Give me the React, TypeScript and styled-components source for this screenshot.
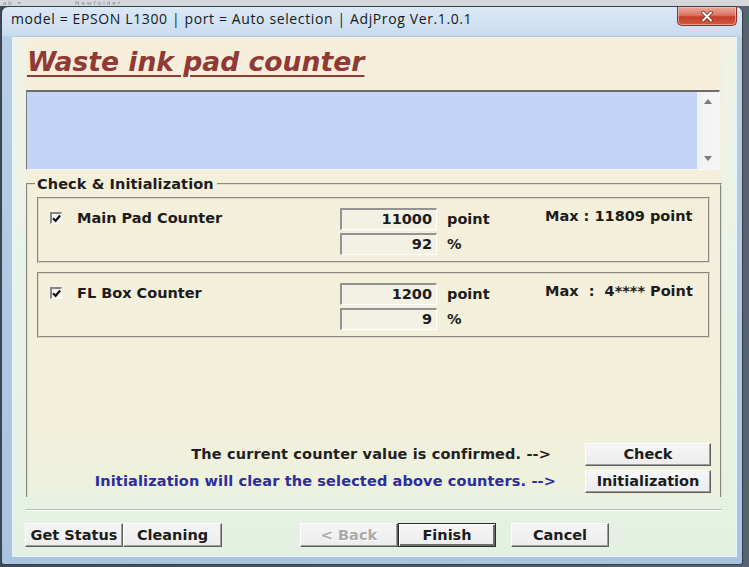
import React from "react";
import styled, { createGlobalStyle } from "styled-components";

const Global = createGlobalStyle`
  html, body { margin: 0; padding: 0; background: #4d5967; }
  body { width: 749px; height: 567px; overflow: hidden; font-family: "DejaVu Sans", sans-serif; }
  #root { width: 749px; height: 567px; }
`;

const Page = styled.div`
  width: 749px;
  height: 567px;
  display: flex;
  flex-direction: column;
  background: linear-gradient(90deg, #3e4a58 0%, #56626f 100%);
`;

const DesktopStrip = styled.div`
  height: 6px;
  flex: none;
  overflow: hidden;
  display: flex;
  gap: 52px;
  padding-left: 3px;
  background: #d4d8da;
  color: #80858a;
  font: 6px/6px "Open Sans", sans-serif;
  letter-spacing: 2px;
  filter: blur(0.6px);
`;

const DesktopRow = styled.div`
  flex: 1;
  display: flex;
`;

const Window = styled.div`
  width: 742px;
  height: 559px;
  margin-left: 1px;
  box-sizing: border-box;
  border: 1px solid #36404c;
  border-radius: 7px 7px 3px 3px;
  padding: 0 5px 7px 10px;
  display: flex;
  flex-direction: column;
  background: linear-gradient(180deg, #dbe8f5 0px, #c9dcef 28px, #b7cee7 30px, #aac3e0 100%);
`;

const TitleBar = styled.div`
  height: 29px;
  flex: none;
  display: flex;
  align-items: flex-start;
`;

const TitleText = styled.div`
  flex: 1;
  margin: 3px 0 0 -1px;
  font: 14px/18px "Open Sans", sans-serif;
  letter-spacing: 0.62px;
  color: #15191e;
  white-space: nowrap;
`;

const CloseButton = styled.div`
  width: 60px;
  height: 19px;
  box-sizing: border-box;
  border: 1px solid #8d2f24;
  border-top: none;
  border-radius: 0 0 5px 5px;
  display: flex;
  align-items: center;
  justify-content: center;
  background: linear-gradient(180deg, #eaa99c 0%, #db7563 45%, #c53e2b 55%, #d2593f 100%);
  box-shadow: inset 0 0 0 1px rgba(255, 210, 200, 0.55);
`;

const Client = styled.div`
  flex: 1;
  display: flex;
  flex-direction: column;
  box-sizing: border-box;
  border: 1px solid #eaf3f7;
  border-top-color: #b8c8d4;
  padding: 1px 14px 0 13px;
  background: linear-gradient(180deg, #f2f2e6 0%, #eaf3e7 40%, #e4f1e2 100%);
`;

const Panel = styled.div`
  height: 459px;
  flex: none;
  display: flex;
  flex-direction: column;
  background: linear-gradient(180deg, #f7eedc 0%, #f4efda 30%, #f2f0db 85%, #ecf1df 100%);
`;

const Header = styled.div`
  height: 50px;
  flex: none;
  box-sizing: border-box;
  padding: 8px 0 0 1px;
`;

const PageTitle = styled.h1`
  margin: 0;
  display: inline-block;
  font: italic bold 26.6px/32px "DejaVu Sans", sans-serif;
  color: #8f3a34;
  text-decoration: underline;
  text-decoration-thickness: 2px;
  text-underline-offset: 4px;
`;

const Memo = styled.div`
  height: 80px;
  margin: 2px 2px 0 0;
  flex: none;
  display: flex;
  box-sizing: border-box;
  border-top: 2px solid #6c6c6c;
  border-left: 1px solid #7a7a7a;
  border-right: 1px solid #f6f6f6;
  border-bottom: 1px solid #f6f6f6;
  background: #c4d3f8;
`;

const MemoText = styled.div`
  flex: 1;
`;

const ScrollBar = styled.div`
  width: 22px;
  display: flex;
  flex-direction: column;
  justify-content: space-between;
  align-items: center;
  padding: 7px 0 8px;
  background: linear-gradient(90deg, #f1f1f1, #f6f6f6);
`;

const GroupBox = styled.section`
  flex: 1;
  margin-top: 6px;
  display: flex;
  flex-direction: column;
`;

const GroupHead = styled.div`
  height: 17px;
  flex: none;
  display: flex;
`;

const HeadLine = styled.span<{ $grow?: boolean }>`
  align-self: flex-end;
  height: 8px;
  width: ${(p) => (p.$grow ? "auto" : "7px")};
  flex: ${(p) => (p.$grow ? 1 : "none")};
  border-top: 2px groove #dedbcb;
  ${(p) => (p.$grow ? "border-right: 2px groove #dedbcb;" : "border-left: 2px groove #dedbcb;")}
`;

const Legend = styled.h2`
  margin: 0;
  padding: 0 3px 0 2px;
  font: bold 14.5px/17px "DejaVu Sans", sans-serif;
  letter-spacing: 0.1px;
  color: #1c1c1c;
`;

const GroupBody = styled.div`
  flex: 1;
  display: flex;
  flex-direction: column;
  padding: 4px 9px 4px 9px;
  border-left: 2px groove #dedbcb;
  border-right: 2px groove #dedbcb;
`;

const CounterFrame = styled.div<{ $top?: number }>`
  height: 66px;
  flex: none;
  margin: ${(p) => p.$top ?? 0}px 1px 0 0;
  box-sizing: border-box;
  border: 2px groove #dedbcb;
  padding: 9px 0 0 11px;
  display: grid;
  grid-template-columns: 27px 263px 97px 108px 1fr;
  grid-template-rows: 22px 22px;
  row-gap: 3px;
  align-items: center;
`;

const CheckBox = styled.span`
  width: 12px;
  height: 12px;
  box-sizing: border-box;
  border-top: 2px solid #858585;
  border-left: 2px solid #858585;
  border-right: 1px solid #ffffff;
  border-bottom: 1px solid #ffffff;
  background: #f7f6f0;
  display: flex;
  align-items: center;
  justify-content: center;
  margin-top: -3px;
`;

const Label = styled.span`
  font: bold 14.5px/17px "DejaVu Sans", sans-serif;
  color: #1c1c1c;
  white-space: pre;
`;

const CounterName = styled(Label)`
  margin-top: -2px;
`;

const ValueBox = styled.div<{ $row: number }>`
  grid-column: 3;
  grid-row: ${(p) => p.$row};
  height: 22px;
  box-sizing: border-box;
  border-top: 2px solid #939393;
  border-left: 2px solid #939393;
  border-right: 1px solid #ffffff;
  border-bottom: 1px solid #ffffff;
  padding-right: 4px;
  text-align: right;
  font: bold 14.5px/19px "DejaVu Sans", sans-serif;
  color: #1c1c1c;
  background: #f3f1e4;
`;

const Unit = styled(Label)<{ $row: number }>`
  grid-column: 4;
  grid-row: ${(p) => p.$row};
  padding-left: 10px;
`;

const MaxText = styled(Label)`
  grid-column: 5;
  grid-row: 1;
  align-self: start;
`;

const Actions = styled.div`
  margin-top: auto;
  display: flex;
  flex-direction: column;
  gap: 4px;
`;

const ActionRow = styled.div`
  display: flex;
  align-items: center;
  justify-content: flex-end;
`;

const ActionText = styled.span<{ $blue?: boolean; $space: number }>`
  margin-right: ${(p) => p.$space}px;
  font: bold 14.5px/17px "DejaVu Sans", sans-serif;
  letter-spacing: 0.13px;
  color: ${(p) => (p.$blue ? "#2d2d9c" : "#1f1f1f")};
  white-space: pre;
`;

const Button = styled.button<{ $w: number; $h?: number; $default?: boolean; $ml?: number }>`
  width: ${(p) => p.$w}px;
  height: ${(p) => p.$h ?? 24}px;
  margin: 0 0 0 ${(p) => p.$ml ?? 0}px;
  padding: 0;
  box-sizing: border-box;
  font: bold 14.5px/1 "DejaVu Sans", sans-serif;
  color: #1c1c1c;
  background: linear-gradient(180deg, #f6f6f6 0%, #ececec 100%);
  border: 1px solid;
  border-color: ${(p) => (p.$default ? "#2a2a2a" : "#ffffff #5e5e5e #5e5e5e #ffffff")};
  box-shadow: ${(p) =>
    p.$default
      ? "inset 1px 1px 0 #ffffff, inset -2px -2px 0 #6e6e6e"
      : "inset -1px -1px 0 #9d9d9d, inset 1px 1px 0 #f0f0f0"};
  &:disabled {
    color: #a9a9a9;
    text-shadow: 1px 1px 0 #ffffff;
  }
`;

const Separator = styled.div`
  height: 1px;
  margin-top: 12px;
  flex: none;
  background: #b3c0b2;
  border-bottom: 1px solid #ffffff;
`;

const ButtonBar = styled.div`
  margin: 12px 0 0 -1px;
  display: flex;
  flex: none;
`;

const Arrow = ({ up }: { up?: boolean }) => (
  <svg width="8" height="5" viewBox="0 0 8 5">
    <path d={up ? "M0 5 L4 0 L8 5 Z" : "M0 0 L4 5 L8 0 Z"} fill="#7b7b7b" />
  </svg>
);

const Check = () => (
  <svg width="9" height="9" viewBox="0 0 9 9">
    <path d="M1 4.2 L3.6 6.8 L8.2 1.6" stroke="#111" strokeWidth="2.2" fill="none" />
  </svg>
);

type Counter = {
  name: string;
  value: string;
  pct: string;
  max: string;
};

const counters: Counter[] = [
  { name: "Main Pad Counter", value: "11000", pct: "92", max: "Max : 11809 point" },
  { name: "FL Box Counter", value: "1200", pct: "9", max: "Max  :  4**** Point" },
];

export default function App() {
  return (
    <Page>
      <Global />
      <DesktopStrip>
        <span>ab =</span>
        <span>Newfolder</span>
      </DesktopStrip>
      <DesktopRow>
        <Window>
          <TitleBar>
            <TitleText>model = EPSON L1300 | port = Auto selection | AdjProg Ver.1.0.1</TitleText>
            <CloseButton>
              <svg width="12" height="11" viewBox="0 0 12 11">
                <path d="M2 1.5 L10 9.5 M10 1.5 L2 9.5" stroke="#7a2a20" strokeWidth="3.6" strokeLinecap="round" />
                <path d="M2 1.5 L10 9.5 M10 1.5 L2 9.5" stroke="#ffffff" strokeWidth="2" strokeLinecap="round" />
              </svg>
            </CloseButton>
          </TitleBar>
          <Client>
            <Panel>
              <Header>
                <PageTitle>Waste ink pad counter</PageTitle>
              </Header>
              <Memo>
                <MemoText />
                <ScrollBar>
                  <Arrow up />
                  <Arrow />
                </ScrollBar>
              </Memo>
              <GroupBox>
                <GroupHead>
                  <HeadLine />
                  <Legend>Check &amp; Initialization</Legend>
                  <HeadLine $grow />
                </GroupHead>
                <GroupBody>
                  {counters.map((c, i) => (
                    <CounterFrame key={c.name} $top={i === 0 ? 0 : 9}>
                      <CheckBox>
                        <Check />
                      </CheckBox>
                      <CounterName>{c.name}</CounterName>
                      <ValueBox $row={1}>{c.value}</ValueBox>
                      <Unit $row={1}>point</Unit>
                      <MaxText>{c.max}</MaxText>
                      <ValueBox $row={2}>{c.pct}</ValueBox>
                      <Unit $row={2}>%</Unit>
                    </CounterFrame>
                  ))}
                  <Actions>
                    <ActionRow>
                      <ActionText $space={34}>The current counter value is confirmed. --&gt;</ActionText>
                      <Button $w={126} $h={23}>Check</Button>
                    </ActionRow>
                    <ActionRow>
                      <ActionText $blue $space={29}>
                        Initialization will clear the selected above counters. --&gt;
                      </ActionText>
                      <Button $w={126} $h={23}>Initialization</Button>
                    </ActionRow>
                  </Actions>
                </GroupBody>
              </GroupBox>
            </Panel>
            <Separator />
            <ButtonBar>
              <Button $w={98}>Get Status</Button>
              <Button $w={99}>Cleaning</Button>
              <Button $w={98} $ml={78} disabled>
                &lt; Back
              </Button>
              <Button $w={98} $default>
                Finish
              </Button>
              <Button $w={98} $ml={15}>Cancel</Button>
            </ButtonBar>
          </Client>
        </Window>
      </DesktopRow>
    </Page>
  );
}
